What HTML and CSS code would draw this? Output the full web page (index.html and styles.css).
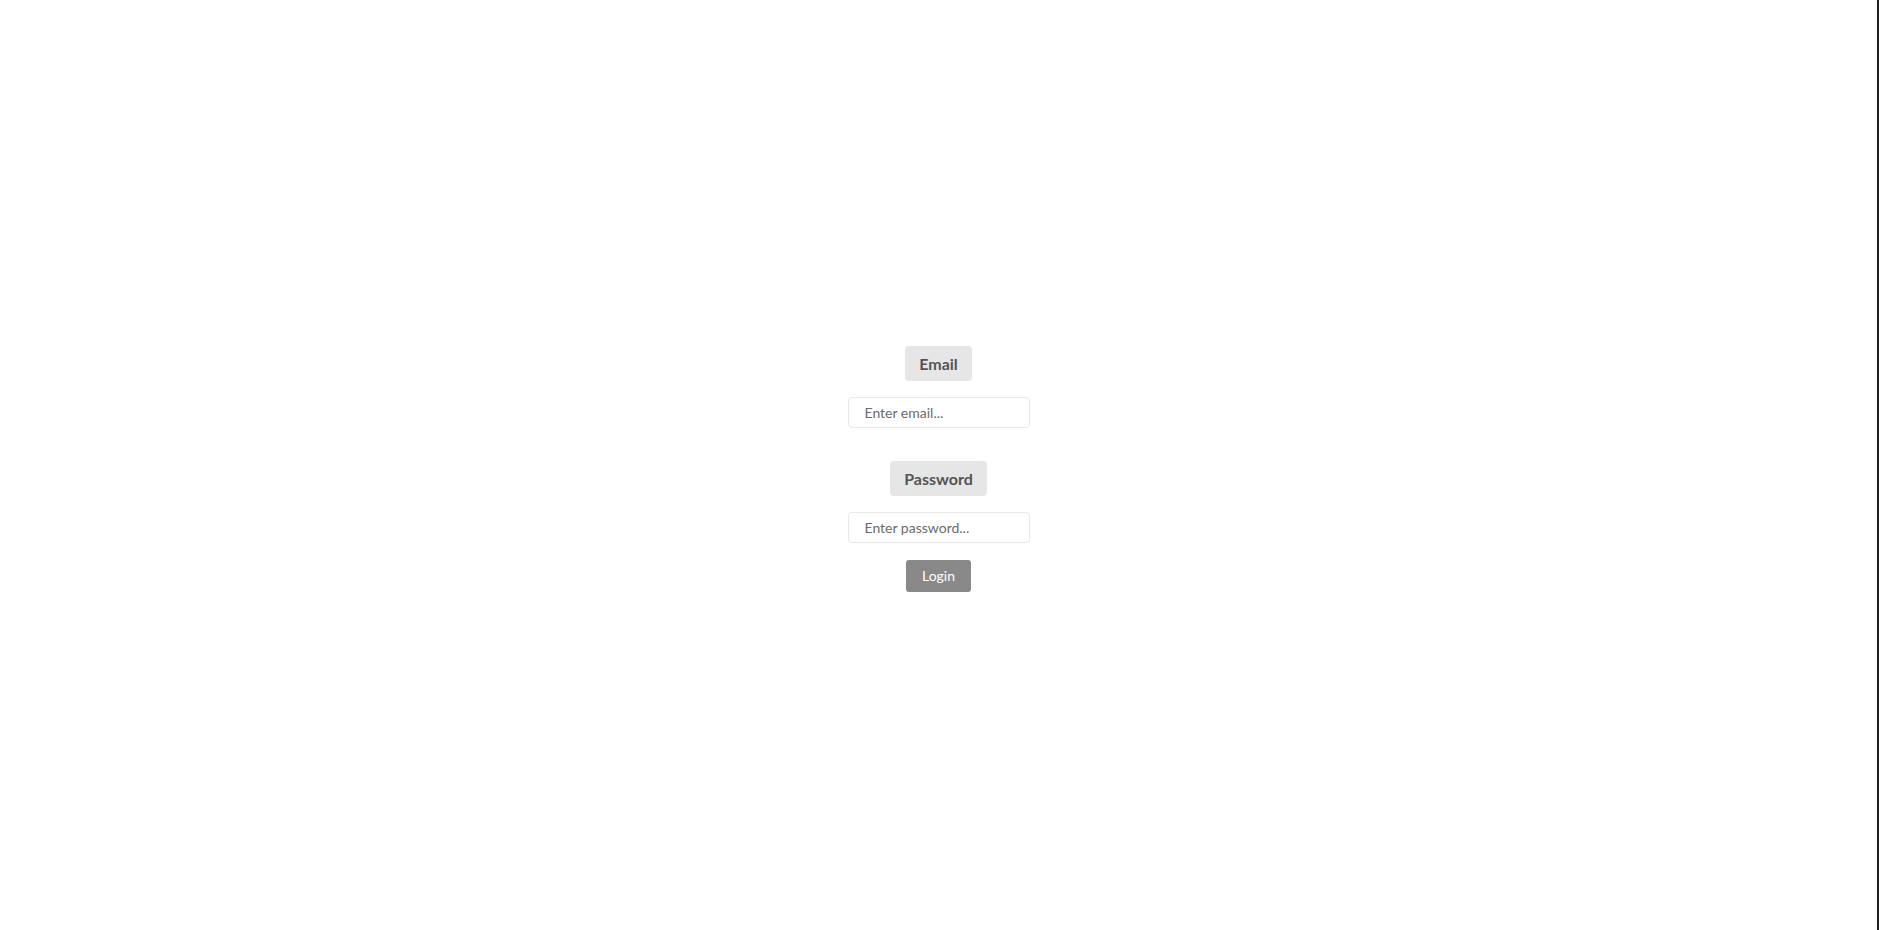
FILE: index.html
```html
<!DOCTYPE html>
<html lang="en">
<head>
<meta charset="utf-8">
<title>Login</title>
<link rel="stylesheet" href="styles.css">
</head>
<body>
<div class="page">
  <form class="login-form">
    <label class="field-label" for="email">Email</label>
    <input class="field-input" id="email" type="email" placeholder="Enter email...">
    <label class="field-label label-second" for="password">Password</label>
    <input class="field-input" id="password" type="password" placeholder="Enter password...">
    <button class="login-btn" type="button">Login</button>
  </form>
</div>
</body>
</html>
```
FILE: styles.css
```css
html, body {
  margin: 0;
  padding: 0;
  background: #ffffff;
}

.page {
  box-sizing: border-box;
  height: 100vh;
  border-right: 2px solid #1c1c1c;
  display: flex;
  align-items: center;
  justify-content: center;
  font-family: Lato, "Open Sans", sans-serif;
}

.login-form {
  display: flex;
  flex-direction: column;
  align-items: center;
  margin-top: 7px;
}

.field-label {
  display: block;
  background: #e6e6e6;
  color: #545454;
  font-weight: 700;
  font-size: 16px;
  line-height: 19px;
  padding: 8px 14px;
  border-radius: 4px;
  margin-bottom: 16px;
}

.label-second {
  margin-top: 33px;
}

.field-input {
  box-sizing: border-box;
  width: 182px;
  height: 31px;
  border: 1px solid #e8e8e8;
  border-radius: 4px;
  padding: 0 16px;
  font-family: Lato, "Open Sans", sans-serif;
  font-size: 14px;
  color: #333;
  background: #fff;
  outline: none;
}

.field-input::placeholder {
  color: #6b6b6b;
}

.login-btn {
  margin-top: 17px;
  width: 65px;
  height: 32px;
  background: #898989;
  color: #ffffff;
  border: none;
  border-radius: 3px;
  font-family: Lato, "Open Sans", sans-serif;
  font-size: 14px;
  padding: 0;
}
```
